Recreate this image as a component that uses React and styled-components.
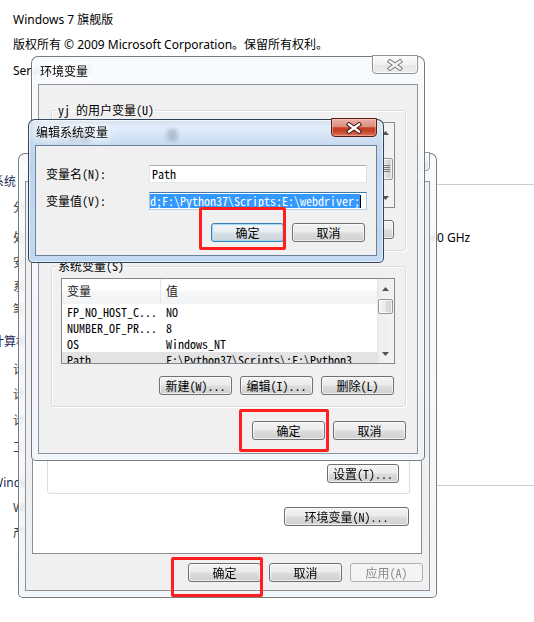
import React from "react";
import styled, { createGlobalStyle, css } from "styled-components";

// Dialog text: full-width CJK / half-width Latin, like the classic 9pt dialog font
const DLG = `"Noto Sans Mono CJK SC", "Noto Sans Mono CJK JP", "Noto Sans CJK SC", monospace`;
const UI = `"Noto Sans", "Noto Sans CJK SC", sans-serif`;
const CAPTION = `"Noto Sans CJK SC", sans-serif`;

const GlobalStyle = createGlobalStyle`
  html, body { margin: 0; padding: 0; background: #fff; }
  #root { width: 534px; height: 622px; }
`;

const Desktop = styled.div`
  position: relative;
  width: 534px;
  height: 622px;
  overflow: hidden;
  background: #fff;
`;

/* ---------- system page behind the dialogs ---------- */

const Page = styled.div`
  display: flex;
  flex-direction: column;
  padding: 12px 0 0 13px;
  font-family: ${UI};
  font-size: 12px;
  color: #000;
`;

const PageRow = styled.div`
  height: ${(p) => p.$h}px;
  line-height: 16px;
  white-space: nowrap;
  display: flex;
  align-items: flex-start;
  ${(p) =>
    p.$head &&
    css`
      margin-left: -21px;
      color: #1e2a55;
    `}
`;

const Rule = styled.div`
  flex: 1;
  height: 1px;
  margin: 10px 0 0 8px;
  background: #cdcdcd;
`;

const RowLabel = styled.span`
  flex: none;
  width: 120px;
  color: #3c3c3c;
`;

const RowValue = styled.span`
  flex: none;
  width: 287px;
  overflow: hidden;
`;

const RowExtra = styled.span`
  flex: none;
`;

/* ---------- window chrome ---------- */

const Window = styled.div`
  position: absolute;
  left: ${(p) => p.$x}px;
  top: ${(p) => p.$y}px;
  width: ${(p) => p.$w}px;
  height: ${(p) => p.$h}px;
  box-sizing: border-box;
  display: flex;
  flex-direction: column;
  padding: 0 6px 6px;
  border: 1px solid ${(p) => (p.$active ? "rgba(30, 48, 72, 0.9)" : "rgba(72, 72, 72, 0.72)")};
  border-radius: 7px 7px 5px 5px;
  background: ${(p) =>
    p.$active
      ? "linear-gradient(180deg, rgba(214,232,250,0.55) 0px, rgba(176,206,238,0.62) 24px, rgba(186,212,241,0.86) 40px, rgba(190,215,242,0.9) 100%)"
      : "linear-gradient(180deg, rgba(247,250,253,0.86) 0px, rgba(238,244,250,0.84) 100%)"};
  backdrop-filter: blur(${(p) => (p.$active ? 2 : 1.8)}px);
  box-shadow: inset 0 0 0 1px rgba(255, 255, 255, 0.6);
`;

const TitleBar = styled.div`
  flex: none;
  height: ${(p) => p.$h}px;
  display: flex;
  align-items: flex-start;
`;

const Caption = styled.span`
  margin: ${(p) => p.$top}px 0 0 ${(p) => p.$left}px;
  font: 12px/16px ${CAPTION};
  color: #000;
  text-shadow: 0 0 6px #fff, 0 0 10px rgba(255, 255, 255, 0.95), 0 0 14px rgba(255, 255, 255, 0.8);
`;

const CloseBtn = styled.div`
  margin: -2px 0 0 auto;
  width: 46px;
  height: 19px;
  box-sizing: border-box;
  display: flex;
  align-items: center;
  justify-content: center;
  border-radius: 0 0 4px 4px;
  ${(p) =>
    p.$active
      ? css`
          border: 1px solid #5a1e14;
          background: linear-gradient(180deg, #eab2a6 0%, #dc8e7e 45%, #c43c24 52%, #c8472f 75%, #db7a60 100%);
          box-shadow: inset 0 0 0 1px rgba(255, 200, 190, 0.45);
        `
      : css`
          border: 1px solid #8e9297;
          background: linear-gradient(180deg, #fbfbfb 0%, #f1f1f1 50%, #e6e6e6 52%, #ececec 100%);
          box-shadow: inset 0 0 0 1px rgba(255, 255, 255, 0.8);
        `}
`;

function CloseGlyph({ active }) {
  const d = "M-5 -3.5 L5 3.5 M5 -3.5 L-5 3.5";
  return (
    <svg width="16" height="12" viewBox="-8 -6 16 12">
      <path d={d} stroke={active ? "#3d130c" : "#767b81"} strokeWidth="4.4" strokeLinecap="square" />
      <path d={d} stroke={active ? "#ffffff" : "#f6f6f6"} strokeWidth="2.4" strokeLinecap="square" />
    </svg>
  );
}

const Client = styled.div`
  flex: 1;
  min-height: 0;
  box-sizing: border-box;
  display: flex;
  flex-direction: column;
  padding: ${(p) => p.$pad || "0"};
  background: #f0f0f0;
  border: 1px solid ${(p) => (p.$active ? "#6a819b" : "#8f9399")};
`;

/* ---------- common controls ---------- */

const Button = styled.div`
  flex: none;
  box-sizing: border-box;
  width: ${(p) => p.$w || 73}px;
  height: 19px;
  display: flex;
  align-items: center;
  justify-content: center;
  border: 1px solid #707070;
  border-radius: 3px;
  background: linear-gradient(180deg, #f3f3f3 0%, #ebebeb 47%, #dddddd 53%, #cfcfcf 100%);
  box-shadow: inset 0 0 0 1px rgba(252, 252, 252, 0.7);
  font: 12px/14px ${DLG};
  color: #000;
  white-space: nowrap;
  ${(p) =>
    p.$default &&
    css`
      border-color: #3c7fb1;
      background: linear-gradient(180deg, #f0f5f8 0%, #e7edf1 47%, #d8e0e6 53%, #cbd5dc 100%);
      box-shadow: inset 0 0 0 1px #9fdaf8;
    `}
  ${(p) =>
    p.$disabled &&
    css`
      border-color: #adb2b5;
      background: #f4f4f4;
      box-shadow: none;
      color: #8a8a8a;
    `}
`;

const ButtonRow = styled.div`
  flex: none;
  display: flex;
  justify-content: flex-end;
  gap: ${(p) => p.$gap ?? 8}px;
  margin: ${(p) => p.$m || "0"};
`;

const GroupBox = styled.fieldset`
  margin: ${(p) => p.$m || "0"};
  padding: 0;
  min-width: 0;
  border: 1px solid #d5dfe5;
  border-radius: 3px;
  box-shadow: inset 1px 1px 0 #fff, 1px 1px 0 #fff;
`;

const Legend = styled.legend`
  margin-left: 5px;
  padding: 0 1px;
  font: 12px/14px ${DLG};
  color: #000;
`;

const GroupInner = styled.div`
  display: flex;
  flex-direction: column;
  padding: ${(p) => p.$pad};
`;

const GroupText = styled.div`
  font: 12px/16px ${DLG};
  color: #000;
`;

/* ---------- list view ---------- */

const ListView = styled.div`
  flex: none;
  height: 86px;
  box-sizing: border-box;
  display: flex;
  border: 1px solid #828790;
  background: #fff;
  overflow: hidden;
`;

const ListMain = styled.div`
  flex: 1;
  min-width: 0;
  display: flex;
  flex-direction: column;
  overflow: hidden;
`;

const ListHead = styled.div`
  flex: none;
  height: 25px;
  display: grid;
  grid-template-columns: 99px 1fr;
  background: linear-gradient(180deg, #ffffff 0%, #ffffff 45%, #f6f7f8 50%, #f2f3f4 100%);
`;

const HeadCell = styled.div`
  padding-left: 5px;
  font: 12px/24px ${CAPTION};
  color: #1e1e1e;
  ${(p) => p.$first && css`border-right: 1px solid #e3e5e8;`}
`;

const ListRow = styled.div`
  flex: none;
  height: 16px;
  display: grid;
  grid-template-columns: 99px 1fr;
  background: ${(p) => (p.$sel ? "#e3e3e3" : "transparent")};
`;

const Cell = styled.div`
  padding-left: 5px;
  font: 12px/16px ${DLG};
  color: #000;
  white-space: nowrap;
  overflow: hidden;
`;

const ScrollBar = styled.div`
  flex: none;
  width: 17px;
  display: flex;
  flex-direction: column;
  background: linear-gradient(90deg, #e2e2e2 0px, #eeeeee 2px, #f3f3f3 100%);
`;

const ArrowBtn = styled.div`
  flex: none;
  height: 19px;
  display: flex;
  align-items: center;
  justify-content: center;
`;

const Track = styled.div`
  flex: 1;
  display: flex;
  flex-direction: column;
  padding-top: ${(p) => p.$offset}px;
`;

const Thumb = styled.div`
  flex: none;
  margin: 0 1px;
  height: ${(p) => p.$h}px;
  box-sizing: border-box;
  display: flex;
  align-items: center;
  justify-content: center;
  border: 1px solid #979797;
  border-radius: 2px;
  background: linear-gradient(90deg, #f4f4f4 0%, #ececec 45%, #dcdcdc 55%, #d2d2d2 100%);
  box-shadow: inset 0 0 0 1px rgba(255, 255, 255, 0.7);
`;

function Arrow({ up }) {
  return (
    <svg width="7" height="4" viewBox="0 0 7 4">
      <path d={up ? "M0 4 L3.5 0 L7 4Z" : "M0 0 L3.5 4 L7 0Z"} fill="#545454" />
    </svg>
  );
}

function Grip() {
  return (
    <svg width="8" height="8" viewBox="0 0 8 8">
      {[0.5, 2.5, 4.5, 6.5].map((y) => (
        <path key={y} d={`M0 ${y} H8`} stroke="#7c7c7c" strokeWidth="1" />
      ))}
    </svg>
  );
}

function VarList({ rows, thumbTop, thumbH, grip, selected }) {
  return (
    <ListView>
      <ListMain>
        <ListHead>
          <HeadCell $first>变量</HeadCell>
          <HeadCell>值</HeadCell>
        </ListHead>
        {rows.map(([k, v]) => (
          <ListRow key={k} $sel={k === selected}>
            <Cell>{k}</Cell>
            <Cell>{v}</Cell>
          </ListRow>
        ))}
      </ListMain>
      <ScrollBar>
        <ArrowBtn>
          <Arrow up />
        </ArrowBtn>
        <Track $offset={thumbTop}>
          <Thumb $h={thumbH}>{grip && <Grip />}</Thumb>
        </Track>
        <ArrowBtn>
          <Arrow />
        </ArrowBtn>
      </ScrollBar>
    </ListView>
  );
}

/* ---------- edit dialog form ---------- */

const FormGrid = styled.div`
  display: grid;
  grid-template-columns: 103px 1fr;
  row-gap: 9px;
  align-items: center;
`;

const FieldLabel = styled.div`
  font: 12px/14px ${DLG};
  color: #000;
  white-space: nowrap;
`;

const Field = styled.div`
  box-sizing: border-box;
  height: 18px;
  display: flex;
  align-items: center;
  padding-left: ${(p) => (p.$focus ? 0 : 2)}px;
  overflow: hidden;
  white-space: nowrap;
  background: #fff;
  border: 1px solid;
  border-color: ${(p) => (p.$focus ? "#3d7bad #a4c9e3 #b5cfe7 #a4c9e3" : "#abadb3 #dbdfe6 #e3e9ef #e2e3ea")};
  font: 12px/14px ${DLG};
  color: #000;
`;

const Selection = styled.span`
  display: inline-block;
  height: 14px;
  background: #3399ff;
  color: #fff;
`;

const Caret = styled.span`
  display: inline-block;
  width: 1px;
  height: 13px;
  background: #000;
`;

/* ---------- property sheet ---------- */

const TabStrip = styled.div`
  flex: none;
  height: 22px;
  display: flex;
  align-items: flex-end;
  padding-left: 8px;
`;

const Tab = styled.div`
  height: ${(p) => (p.$on ? 21 : 18)}px;
  padding: 0 7px;
  box-sizing: border-box;
  margin-bottom: -1px;
  border: 1px solid #898c95;
  border-bottom: ${(p) => (p.$on ? "none" : "1px solid #898c95")};
  border-radius: 2px 2px 0 0;
  background: ${(p) => (p.$on ? "#fff" : "linear-gradient(#f2f2f2, #dcdcdc)")};
  font: 12px/17px ${DLG};
  z-index: ${(p) => (p.$on ? 1 : 0)};
`;

const TabPage = styled.div`
  flex: 1;
  min-height: 0;
  margin: 0 7px 0 6px;
  display: flex;
  flex-direction: column;
  justify-content: flex-end;
  padding-bottom: 27px;
  border: 1px solid #898c95;
  background: #fff;
  overflow: hidden;
`;

const Note = styled.div`
  margin: 0 0 8px 14px;
  font: 12px/16px ${DLG};
`;

/* ---------- callouts ---------- */

const Mark = styled.div`
  position: absolute;
  left: ${(p) => p.$x}px;
  top: ${(p) => p.$y}px;
  width: ${(p) => p.$w}px;
  height: ${(p) => p.$h}px;
  box-sizing: border-box;
  border: 3.5px solid #ff1f1f;
  border-radius: 2px;
  pointer-events: none;
`;

/* ---------- data ---------- */

const pageRows = [
  { h: 25, text: "Windows 7 旗舰版" },
  { h: 26, text: "版权所有 © 2009 Microsoft Corporation。保留所有权利。" },
  { h: 111, text: "Service Pack 1" },
  { h: 26, head: true, text: "系统", rule: true },
  { h: 30, label: "分级:", value: "系统分级不可用" },
  { h: 25, label: "处理器:", value: "Intel(R) Core(TM) i7-3630QM CPU @ 2.40GHz", extra: "2.40 GHz" },
  { h: 24, label: "安装内存(RAM):", value: "8.00 GB" },
  { h: 23, label: "系统类型:", value: "64 位操作系统" },
  { h: 32, label: "笔和触摸:", value: "没有可用于此显示器的笔或触控输入" },
  { h: 28, head: true, text: "计算机名称、域和工作组设置" },
  { h: 25, label: "计算机名:", value: "yj-PC" },
  { h: 26, label: "计算机全名:", value: "yj-PC" },
  { h: 27, label: "计算机描述:", value: "" },
  { h: 35, label: "工作组:", value: "WORKGROUP" },
  { h: 25, head: true, text: "Windows 激活", rule: true },
  { h: 25, label: "Windows 已激活" },
  { h: 25, label: "产品 ID: 00426-OEM-8992662-00006" },
];

const userVars = [
  ["PATH", "C:\\Users\\yj\\AppData\\Roaming\\npm"],
  ["TEMP", "%USERPROFILE%\\AppData\\Local\\Temp"],
  ["TMP", "%USERPROFILE%\\AppData\\Local\\Temp"],
];

const systemVars = [
  ["FP_NO_HOST_C...", "NO"],
  ["NUMBER_OF_PR...", "8"],
  ["OS", "Windows_NT"],
  ["Path", "F:\\Python37\\Scripts\\;F:\\Python3..."],
  ["PATHEXT", ".COM;.EXE;.BAT;.CMD;.VBS"],
];

const tabs = ["计算机名", "硬件", "高级", "系统保护", "远程"];

export default function App() {
  return (
    <>
      <GlobalStyle />
      <Desktop>
        <Page>
          {pageRows.map((r, i) => (
            <PageRow key={i} $h={r.h} $head={r.head}>
              {r.label !== undefined ? (
                <>
                  <RowLabel>{r.label}</RowLabel>
                  {r.value !== undefined && <RowValue>{r.value}</RowValue>}
                  {r.extra && <RowExtra>{r.extra}</RowExtra>}
                </>
              ) : (
                r.text
              )}
              {r.rule && <Rule />}
            </PageRow>
          ))}
        </Page>

        {/* 系统属性 */}
        <Window $x={18} $y={153} $w={419} $h={445}>
          <TitleBar $h={27}>
            <Caption $top={6} $left={2}>系统属性</Caption>
            <CloseBtn>
              <CloseGlyph />
            </CloseBtn>
          </TitleBar>
          <Client>
            <TabStrip>
              {tabs.map((t) => (
                <Tab key={t} $on={t === "高级"}>
                  {t}
                </Tab>
              ))}
            </TabStrip>
            <TabPage>
              <Note>要进行大多数更改，您必须作为管理员登录。</Note>
              <GroupBox $m="0 11px 8px 14px">
                <Legend>性能</Legend>
                <GroupInner $pad="4px 10px 10px 9px">
                  <GroupText>视觉效果，处理器计划，内存使用，以及虚拟内存</GroupText>
                  <ButtonRow $m="10px 0 0">
                    <Button $w={72}>设置(S)...</Button>
                  </ButtonRow>
                </GroupInner>
              </GroupBox>
              <GroupBox $m="0 11px 8px 14px">
                <Legend>用户配置文件</Legend>
                <GroupInner $pad="4px 10px 10px 9px">
                  <GroupText>与登录有关的桌面设置</GroupText>
                  <ButtonRow $m="10px 0 0">
                    <Button $w={72}>设置(E)...</Button>
                  </ButtonRow>
                </GroupInner>
              </GroupBox>
              <GroupBox $m="0 11px 0 14px">
                <Legend>启动和故障恢复</Legend>
                <GroupInner $pad="4px 10px 10px 9px">
                  <GroupText>系统启动、系统失败和调试信息</GroupText>
                  <ButtonRow $m="10px 0 0">
                    <Button $w={72}>设置(T)...</Button>
                  </ButtonRow>
                </GroupInner>
              </GroupBox>
              <ButtonRow $m="13px 12px 0 0">
                <Button $w={125}>环境变量(N)...</Button>
              </ButtonRow>
            </TabPage>
            <ButtonRow $m="9px 6px 8px 0">
              <Button>确定</Button>
              <Button>取消</Button>
              <Button $disabled>应用(A)</Button>
            </ButtonRow>
          </Client>
        </Window>

        {/* 环境变量 */}
        <Window $x={31} $y={56} $w={394} $h={405}>
          <TitleBar $h={27}>
            <Caption $top={6} $left={2}>环境变量</Caption>
            <CloseBtn>
              <CloseGlyph />
            </CloseBtn>
          </TitleBar>
          <Client $pad="18px 11px 0 12px">
            <GroupBox $m="0 0 8px">
              <Legend>yj 的用户变量(U)</Legend>
              <GroupInner $pad="5px 10px 11px 9px">
                <VarList rows={userVars} thumbTop={16} thumbH={22} grip />
                <ButtonRow $m="12px 1px 0 0">
                  <Button>新建(N)...</Button>
                  <Button>编辑(E)...</Button>
                  <Button>删除(D)</Button>
                </ButtonRow>
              </GroupInner>
            </GroupBox>
            <GroupBox>
              <Legend>系统变量(S)</Legend>
              <GroupInner $pad="5px 10px 11px 9px">
                <VarList rows={systemVars} thumbTop={1} thumbH={15} selected="Path" />
                <ButtonRow $m="12px 1px 0 0">
                  <Button>新建(W)...</Button>
                  <Button>编辑(I)...</Button>
                  <Button>删除(L)</Button>
                </ButtonRow>
              </GroupInner>
            </GroupBox>
            <ButtonRow $m="14px 0 0">
              <Button>确定</Button>
              <Button>取消</Button>
            </ButtonRow>
          </Client>
        </Window>

        {/* 编辑系统变量 */}
        <Window $x={28} $y={119} $w={356} $h={144} $active>
          <TitleBar $h={25}>
            <Caption $top={4} $left={1}>编辑系统变量</Caption>
            <CloseBtn $active>
              <CloseGlyph active />
            </CloseBtn>
          </TitleBar>
          <Client $active $pad="19px 9px 0 10px">
            <FormGrid>
              <FieldLabel>变量名(N):</FieldLabel>
              <Field>Path</Field>
              <FieldLabel>变量值(V):</FieldLabel>
              <Field $focus>
                <Selection>d;F:\Python37\Scripts;E:\webdriver;</Selection>
                <Caret />
              </Field>
            </FormGrid>
            <ButtonRow $m="13px 2px 0 0">
              <Button $default>确定</Button>
              <Button>取消</Button>
            </ButtonRow>
          </Client>
        </Window>

        <Mark $x={199} $y={207} $w={87} $h={43} />
        <Mark $x={239} $y={409} $w={90} $h={43} />
        <Mark $x={171} $y={557} $w={92} $h={40} />
      </Desktop>
    </>
  );
}
